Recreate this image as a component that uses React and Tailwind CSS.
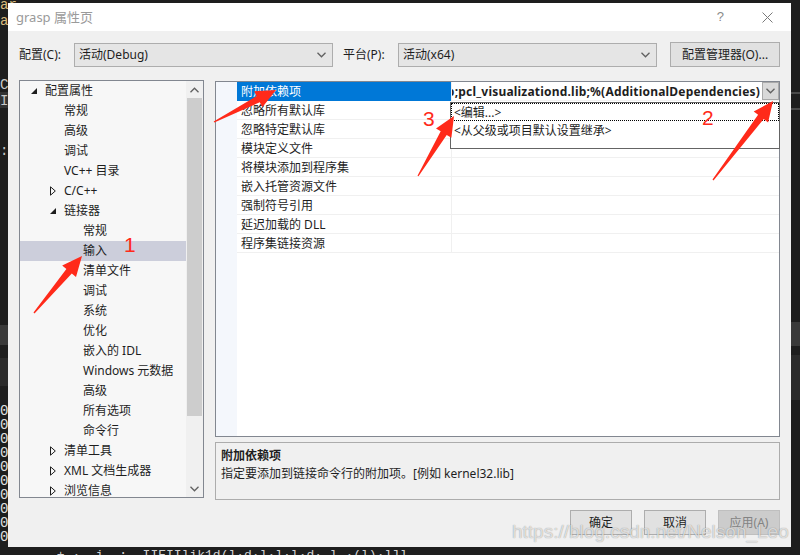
import React from "react";

const tree = [
  { label: "配置属性", level: 0, icon: "open" },
  { label: "常规", level: 1 },
  { label: "高级", level: 1 },
  { label: "调试", level: 1 },
  { label: "VC++ 目录", level: 1 },
  { label: "C/C++", level: 1, icon: "closed" },
  { label: "链接器", level: 1, icon: "open" },
  { label: "常规", level: 2 },
  { label: "输入", level: 2, selected: true },
  { label: "清单文件", level: 2 },
  { label: "调试", level: 2 },
  { label: "系统", level: 2 },
  { label: "优化", level: 2 },
  { label: "嵌入的 IDL", level: 2 },
  { label: "Windows 元数据", level: 2 },
  { label: "高级", level: 2 },
  { label: "所有选项", level: 2 },
  { label: "命令行", level: 2 },
  { label: "清单工具", level: 1, icon: "closed" },
  { label: "XML 文档生成器", level: 1, icon: "closed" },
  { label: "浏览信息", level: 1, icon: "closed" },
];

const indent = ["pl-[11px]", "pl-[30px]", "pl-[49px]"];

const props = [
  "附加依赖项",
  "忽略所有默认库",
  "忽略特定默认库",
  "模块定义文件",
  "将模块添加到程序集",
  "嵌入托管资源文件",
  "强制符号引用",
  "延迟加载的 DLL",
  "程序集链接资源",
];

// red annotation arrow, tail -> tip
function arrowPoints(tx, ty, px, py) {
  const dx = px - tx;
  const dy = py - ty;
  const L = Math.hypot(dx, dy);
  const ux = dx / L;
  const uy = dy / L;
  const nx = -uy;
  const ny = ux;
  const h = 20;
  const w = 9;
  const s = 3.5;
  const bx = px - ux * h;
  const by = py - uy * h;
  return [
    [tx + nx * 0.6, ty + ny * 0.6],
    [bx + nx * s, by + ny * s],
    [bx + nx * w, by + ny * w],
    [px, py],
    [bx - nx * w, by - ny * w],
    [bx - nx * s, by - ny * s],
    [tx - nx * 0.6, ty - ny * 0.6],
  ]
    .map((p) => p[0].toFixed(1) + "," + p[1].toFixed(1))
    .join(" ");
}

const Chevron = ({ down = true }) => (
  <svg width="9" height="6" viewBox="0 0 9 6">
    <path
      d={down ? "M0.5 0.8 L4.5 4.8 L8.5 0.8" : "M0.5 5.2 L4.5 1.2 L8.5 5.2"}
      fill="none"
      stroke="#606060"
      strokeWidth="1.3"
    />
  </svg>
);

const TreeIcon = ({ type }) => {
  if (type === "open")
    return (
      <svg width="6" height="6" viewBox="0 0 6 6">
        <path d="M6 0 L6 6 L0 6 Z" fill="#1e1e1e" />
      </svg>
    );
  if (type === "closed")
    return (
      <svg width="6" height="10" viewBox="0 0 6 10">
        <path d="M0.5 0.8 L5.3 5 L0.5 9.2 Z" fill="none" stroke="#1e1e1e" strokeWidth="1" />
      </svg>
    );
  return null;
};

const Combo = ({ value }) => (
  <div className="w-[259px] shrink-0 h-[24px] border border-[#adadad] bg-[#e5e5e5] flex items-center pl-[4px] pr-[6px]">
    <span className="flex-1">{value}</span>
    <Chevron />
  </div>
);

export default function App() {
  return (
    <div className="relative w-[800px] h-[555px] overflow-hidden bg-[#1e1e1e] pt-[3px] pl-[8px] text-[12px] leading-[18px] text-[#1e1e1e] font-['Noto_Sans','Noto_Sans_CJK_SC',sans-serif]">
      {/* editor behind the dialog */}
      <span className="absolute left-0 top-[-4px] font-['Liberation_Mono',monospace] text-[14px] text-[#d7ba7d]">ar</span>
      <span className="absolute left-0 top-[12px] font-['Liberation_Mono',monospace] text-[14px] text-[#d7ba7d]">ar</span>
      <span className="absolute left-0 top-[76px] font-['Liberation_Mono',monospace] text-[14px] text-[#c8c8c8]">CI</span>
      <div className="absolute left-0 top-[92px] w-[8px] h-[16px] bg-[#333333]" />
      <span className="absolute left-0 top-[92px] font-['Liberation_Mono',monospace] text-[14px] text-[#c8c8c8]">I&lt;</span>
      <span className="absolute left-0 top-[142px] font-['Liberation_Mono',monospace] text-[14px] text-[#c8c8c8]">:</span>
      <div className="absolute left-0 top-[325px] w-[8px] h-[20px] bg-[#3a3a3a]" />
      <div className="absolute left-0 top-[358px] w-[8px] h-[28px] bg-[#2b2b2b]" />
      <div className="absolute left-0 top-[404px] flex flex-col font-['Liberation_Mono',monospace] text-[14px] leading-[14px] text-[#e0e0e0]">
        <span>0</span><span>0</span><span>0</span><span>0</span><span>0</span><span>0</span><span>0</span><span>0</span><span>0</span><span>0</span>
      </div>
      <div className="absolute right-0 top-[92px] w-[9px] h-[2px] bg-[#4a4a4a]" />
      <div className="absolute right-0 top-[108px] w-[9px] h-[2px] bg-[#4a4a4a]" />
      <div className="absolute right-0 top-[322px] w-[9px] h-[24px] bg-[#3a3a3a]" />
      <div className="absolute right-0 top-[355px] w-[9px] h-[45px] bg-[#2b2b2b]" />
      <span className="absolute left-[10px] top-[549px] font-['Liberation_Mono',monospace] text-[13px] leading-[13px] text-[#d4d4d4] whitespace-pre">
        {"  -   + ·  i  :  IIEIIlik1d(l·d·l·l·l·d· l ·(l)·l]l"}
      </span>

      {/* dialog */}
      <div className="relative w-[783px] h-[544px] bg-[#f0f0f0] flex flex-col">
        <div className="h-[28px] bg-white flex items-center pl-[8px] pr-[18px]">
          <span className="text-[#9a9a9a] text-[13px]">grasp 属性页</span>
          <span className="ml-auto text-[#8a8a8a] text-[13px] font-['Liberation_Sans',sans-serif]">?</span>
          <svg className="ml-[38px]" width="11" height="11" viewBox="0 0 11 11">
            <path d="M0.5 0.5 L10.5 10.5 M10.5 0.5 L0.5 10.5" stroke="#7a7a7a" strokeWidth="1" />
          </svg>
        </div>

        <div className="flex-1 px-[11px] pt-[11px] flex flex-col">
          <div className="h-[25px] flex items-center">
            <span className="w-[55px] shrink-0">配置(C):</span>
            <Combo value="活动(Debug)" />
            <span className="ml-[10px] w-[55px] shrink-0">平台(P):</span>
            <Combo value="活动(x64)" />
            <div className="ml-[13px] w-[110px] shrink-0 h-[25px] border border-[#adadad] bg-[#e1e1e1] flex items-center justify-center">
              配置管理器(O)...
            </div>
          </div>

          <div className="mt-[13px] flex gap-[11px]">
            {/* tree */}
            <div className="w-[185px] shrink-0 h-[418px] border border-[#828790] bg-[#f7f7f7] flex">
              <div className="flex-1 min-w-0 overflow-hidden">
                {tree.map((t, i) => (
                  <div
                    key={i}
                    className={`h-[20px] flex items-center whitespace-nowrap ${indent[t.level]} ${t.selected ? "bg-[#cccedb]" : ""}`}
                  >
                    <span className="w-[14px] shrink-0 flex items-center">
                      <TreeIcon type={t.icon} />
                    </span>
                    <span>{t.label}</span>
                  </div>
                ))}
              </div>
              <div className="w-[17px] shrink-0 bg-[#f0f0f0] flex flex-col">
                <div className="h-[17px] flex items-center justify-center">
                  <Chevron down={false} />
                </div>
                <div className="h-[318px] mx-[1px] bg-[#cdcdcd]" />
                <div className="flex-1" />
                <div className="h-[17px] flex items-center justify-center">
                  <Chevron />
                </div>
              </div>
            </div>

            {/* right column */}
            <div className="w-[565px] shrink-0 min-w-0 flex flex-col">
              <div className="relative mt-[1px] h-[356px] border border-[#828790] bg-white flex">
                <div className="w-[21px] shrink-0 bg-[#f4f7fc]" />
                <div className="flex-1 min-w-0">
                  {props.map((p, i) => (
                    <div key={i} className="h-[19px] flex">
                      <div
                        className={`w-[214px] shrink-0 pl-[4px] pt-[1px] whitespace-nowrap ${i === 0 ? "bg-[#0078d7] text-white" : "border-b border-[#f0f0f0]"}`}
                      >
                        {p}
                      </div>
                      <div className="flex-1 min-w-0 border-l border-b border-[#f0f0f0] flex">
                        {i === 0 && (
                          <>
                            <div className="flex-1 min-w-0 overflow-hidden flex justify-end items-start pt-[1px] whitespace-nowrap font-bold tracking-[0.2px] pr-[2px]">
                              <span className="shrink-0">kernel32.lib;pcl_commond.lib;pcl_visualizationd.lib;%(AdditionalDependencies)</span>
                            </div>
                            <div className="w-[17px] shrink-0 h-[18px] border border-[#a9a9a9] bg-[#d9d9d9] flex items-center justify-center">
                              <Chevron />
                            </div>
                          </>
                        )}
                      </div>
                    </div>
                  ))}
                </div>

                {/* open dropdown list */}
                <div className="absolute left-[234px] top-[20px] w-[330px] h-[47px] border border-[#646464] bg-white">
                  <div className="h-[18px] pl-[2px] pt-[1px] border border-dotted border-black leading-[16px]">&lt;编辑...&gt;</div>
                  <div className="h-[18px] pl-[3px] pt-[1px]">&lt;从父级或项目默认设置继承&gt;</div>
                </div>
              </div>

              <div className="mt-[5px] h-[58px] border border-[#acacac] bg-[#f0f0f0] px-[5px] pt-[4px]">
                <div className="font-bold">附加依赖项</div>
                <div>指定要添加到链接命令行的附加项。[例如 kernel32.lib]</div>
              </div>
            </div>
          </div>

          <div className="mt-[10px] flex justify-end gap-[12px]">
            <div className="w-[62px] h-[25px] border border-[#adadad] bg-[#e1e1e1] flex items-center justify-center">确定</div>
            <div className="w-[62px] h-[25px] border border-[#adadad] bg-[#e1e1e1] flex items-center justify-center">取消</div>
            <div className="w-[62px] h-[25px] border border-[#bfbfbf] bg-[#cccccc] text-[#838383] flex items-center justify-center">应用(A)</div>
          </div>
        </div>
      </div>

      {/* watermark */}
      <span className="absolute left-[512px] top-[520px] text-[19px] leading-[24px] text-white/70 font-['Liberation_Sans',sans-serif] [text-shadow:0_0_1px_rgba(0,0,0,0.45)] pointer-events-none">
        https://blog.csdn.net/Nelson_Leo
      </span>

      {/* red annotations */}
      <svg className="absolute left-0 top-0 pointer-events-none" width="800" height="555" viewBox="0 0 800 555">
        <polygon points={arrowPoints(34, 313, 82, 256)} fill="#ff2a1a" />
        <polygon points={arrowPoints(214, 122, 276, 90)} fill="#ff2a1a" />
        <polygon points={arrowPoints(418, 176, 454, 116)} fill="#ff2a1a" />
        <polygon points={arrowPoints(713, 180, 773, 101)} fill="#ff2a1a" />
      </svg>
      <span className="absolute left-[124px] top-[233px] text-[21px] leading-[24px] text-[#ff2a1a] font-['Liberation_Sans',sans-serif]">1</span>
      <span className="absolute left-[702px] top-[106px] text-[21px] leading-[24px] text-[#ff2a1a] font-['Liberation_Sans',sans-serif]">2</span>
      <span className="absolute left-[423px] top-[107px] text-[21px] leading-[24px] text-[#ff2a1a] font-['Liberation_Sans',sans-serif]">3</span>
    </div>
  );
}
